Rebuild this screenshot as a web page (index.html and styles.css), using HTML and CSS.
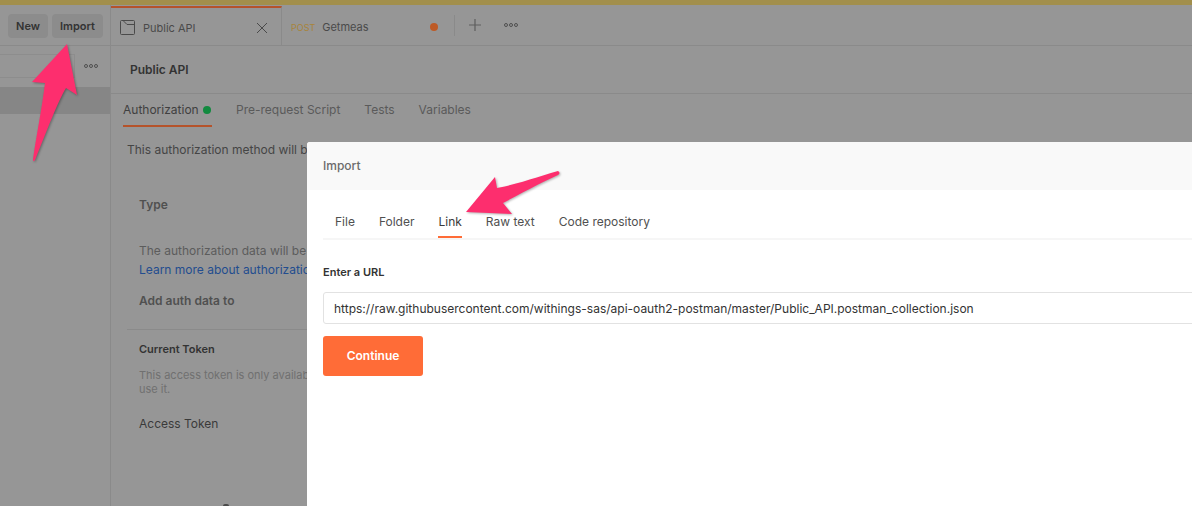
FILE: index.html
```html
<!DOCTYPE html>
<html lang="en">

<head>
    <meta charset="UTF-8">
    <meta name="viewport" content="width=device-width">
    <title>Import</title>
    <link rel="stylesheet" href="styles.css">
</head>

<body>
    <div class="strip"></div>

    <div class="app">
        <aside class="sidebar">
            <div class="side-top">
                <button class="side-btn">New</button>
                <button class="side-btn">Import</button>
            </div>
            <div class="side-search">
                <div class="search-box"></div>
                <span class="dots"><i></i><i></i><i></i></span>
            </div>
            <div class="side-row"></div>
        </aside>

        <main class="main">
            <div class="tabbar">
                <div class="tab tab-active">
                    <svg class="tab-icon" width="15" height="15" viewBox="0 0 15 15" fill="none" stroke="#4a4a4a" stroke-width="1">
                        <rect x="0.5" y="0.5" width="14" height="14" rx="1" />
                        <path d="M3 0.5L7 4.5H14.5" />
                    </svg>
                    <span class="tab-name">Public API</span>
                    <svg class="tab-close" width="12" height="12" viewBox="0 0 12 12" stroke="#4a4a4a" stroke-width="1">
                        <path d="M1 1l10 10M11 1L1 11" />
                    </svg>
                </div>
                <div class="tab tab-req">
                    <span class="method">POST</span>
                    <span class="tab-name">Getmeas</span>
                    <span class="unsaved"></span>
                </div>
                <div class="tab-tools">
                    <svg width="14" height="14" viewBox="0 0 14 14" stroke="#5e5e5e" stroke-width="1.2">
                        <path d="M7 1v12M1 7h12" />
                    </svg>
                    <span class="dots"><i></i><i></i><i></i></span>
                </div>
            </div>

            <div class="title-row">Public API</div>

            <nav class="subtabs">
                <span class="subtab subtab-active">Authorization <b class="green-dot"></b></span>
                <span class="subtab">Pre-request Script</span>
                <span class="subtab">Tests</span>
                <span class="subtab">Variables</span>
            </nav>

            <section class="auth">
                <p class="auth-intro">This authorization method will be used</p>
                <div class="auth-body">
                    <h4 class="auth-type">Type</h4>
                    <p class="auth-note">The authorization data will be automatically</p>
                    <a class="auth-link">Learn more about authorization</a>
                    <h4 class="auth-add">Add auth data to</h4>
                </div>
                <div class="token">
                    <h4 class="token-title">Current Token</h4>
                    <p class="token-note">This access token is only available to<br>use it.</p>
                    <div class="token-label">Access Token</div>
                    <div class="token-foot"></div>
                </div>
            </section>
        </main>
    </div>

    <div class="modal">
        <div class="modal-head">Import</div>
        <div class="modal-body">
            <nav class="modal-tabs">
                <span class="modal-tab">File</span>
                <span class="modal-tab">Folder</span>
                <span class="modal-tab modal-tab-active">Link</span>
                <span class="modal-tab">Raw text</span>
                <span class="modal-tab">Code repository</span>
            </nav>
            <label class="url-label" for="url">Enter a URL</label>
            <input class="url-input" id="url" type="text" value="https://raw.githubusercontent.com/withings-sas/api-oauth2-postman/master/Public_API.postman_collection.json">
            <button class="continue">Continue</button>
        </div>
    </div>

    <!-- arrows drawn on top of the screenshot -->
    <svg class="arrow arrow-import" width="70" height="130" viewBox="0 0 70 130">
        <path d="M37 1L47 52 36 45C28 58 18 85 5 117Q3 120 3 116C6 95 12 65 15 40L2 39Z" />
    </svg>
    <svg class="arrow arrow-link" width="100" height="50" viewBox="0 0 100 50">
        <path d="M93 3Q96 5 93 7C75 15 55 26 38 35L47 46 1 44 30 9 32 20C50 17 72 9 93 3Z" />
    </svg>
</body>

</html>
```
FILE: styles.css
```css
* {
    box-sizing: border-box;
}

html,
body {
    height: 100%;
}

body {
    font-family: 'Inter', 'Liberation Sans', sans-serif;
    background-color: #969696;
    color: #454545;
    font-size: 12px;
    margin: 0;
    overflow: hidden;
    position: relative;
}

p,
h4 {
    margin: 0;
}

.strip {
    height: 5px;
    background-color: #a28f4c;
}

.app {
    display: flex;
    height: 501px;
}

/* sidebar */
.sidebar {
    width: 111px;
    flex-shrink: 0;
    border-right: 1px solid #8a8a8a;
}

.side-top {
    height: 41px;
    display: flex;
    align-items: center;
    gap: 4px;
    padding: 1px 7px 0 0;
    border-bottom: 1px solid #8a8a8a;
    justify-content: flex-end;
}

.side-btn {
    height: 24px;
    border: none;
    border-radius: 4px;
    background-color: #8c8c8c;
    color: #333;
    font-family: inherit;
    font-size: 11px;
    font-weight: 600;
    padding: 0 8px;
}

.side-search {
    height: 32px;
    display: flex;
    align-items: center;
    justify-content: space-between;
    padding-right: 12px;
    margin-top: 4px;
}

.search-box {
    width: 75px;
    height: 24px;
    border: 1px solid #8d8d8d;
    border-left: none;
}

.side-row {
    height: 27px;
    margin-top: 5px;
    background-color: #868686;
}

.dots {
    display: inline-flex;
    gap: 1px;
}

.dots i {
    width: 4px;
    height: 4px;
    border: 1px solid #4f4f4f;
    border-radius: 50%;
}

/* main area */
.main {
    flex: 1;
    min-width: 0;
}

.tabbar {
    height: 41px;
    display: flex;
    border-bottom: 1px solid #8a8a8a;
}

.tab {
    display: flex;
    align-items: center;
}

.tab-active {
    width: 171px;
    height: 40px;
    margin-top: 1px;
    padding: 1px 13px 0 9px;
    border-top: 2px solid #b5532b;
    border-right: 1px solid #8a8a8a;
}

.tab-icon {
    margin-right: 8px;
}

.tab-close {
    margin-left: auto;
}

.tab-name {
    font-size: 11px;
    color: #4a4a4a;
}

.tab-req {
    width: 173px;
    height: 21px;
    margin-top: 10px;
    padding: 3px 0 0 9px;
    border-right: 1px solid #8a8a8a;
}

.method {
    font-size: 9px;
    color: #a8843a;
    margin-right: 7px;
}

.unsaved {
    width: 8px;
    height: 8px;
    border-radius: 50%;
    background-color: #bd5a26;
    margin-left: auto;
    margin-right: 16px;
}

.tab-tools {
    display: flex;
    align-items: center;
    gap: 22px;
    padding-left: 13px;
}

.title-row {
    height: 48px;
    padding: 16px 0 0 19px;
    font-size: 12px;
    font-weight: 600;
    color: #333;
    border-bottom: 1px solid #8a8a8a;
}

.subtabs {
    display: flex;
    gap: 24px;
    padding-left: 12px;
    height: 33px;
}

.subtab {
    font-size: 12px;
    color: #5a5a5a;
    padding-top: 8px;
}

.subtab-active {
    color: #404040;
    width: 89px;
    border-bottom: 2px solid #b5532b;
}

.green-dot {
    display: inline-block;
    width: 8px;
    height: 8px;
    margin-left: 1px;
    border-radius: 50%;
    background-color: #128a3f;
}

.auth {
    height: 374px;
    white-space: nowrap;
}

.auth-intro {
    font-size: 12px;
    line-height: 15px;
    padding: 15px 0 0 16px;
}

.auth-body {
    padding: 40px 0 0 28px;
    height: 172px;
    font-size: 12px;
    line-height: 16px;
}

.auth-type,
.auth-add {
    font-size: 12px;
    font-weight: 600;
    color: #505050;
}

.auth-note {
    color: #5c5c5c;
    margin-top: 30px;
}

.auth-link {
    display: block;
    color: #234d8f;
    margin-top: 3px;
}

.auth-add {
    margin-top: 15px;
}

.token {
    margin-left: 16px;
    padding: 12px 0 0 12px;
    border-top: 1px solid #8a8a8a;
}

.token-title {
    font-size: 11px;
    line-height: 14px;
    font-weight: 600;
    color: #333;
}

.token-note {
    font-size: 11px;
    line-height: 14px;
    color: #707070;
    margin-top: 12px;
}

.token-label {
    font-size: 12px;
    line-height: 16px;
    color: #3a3a3a;
    margin-top: 20px;
}

.token-foot {
    width: 6px;
    height: 2px;
    margin: 72px 0 0 84px;
    border-radius: 3px 3px 0 0;
    background-color: #4a4a4a;
}

/* import dialog, sits above the dimmed app */
.modal {
    position: absolute;
    left: 307px;
    top: 142px;
    right: 0;
    bottom: 0;
    background-color: #fff;
    border-radius: 3px 0 0 0;
    overflow: hidden;
}

.modal-head {
    height: 48px;
    padding: 16px 16px 0;
    background-color: #f9f9f9;
    font-size: 12px;
    font-weight: 500;
    color: #6b6b6b;
}

.modal-body {
    padding: 0 16px;
}

.modal-tabs {
    display: flex;
    gap: 24px;
    padding-left: 12px;
    margin-right: -16px;
    height: 50px;
    border-bottom: 2px solid #f6f6f6;
}

.modal-tab {
    font-size: 12px;
    color: #505050;
    padding-top: 24px;
    height: 48px;
}

.modal-tab-active {
    border-bottom: 2px solid #ff6c37;
    color: #3a3a3a;
}

.url-label {
    display: block;
    font-size: 11px;
    font-weight: 600;
    color: #333;
    margin-top: 25px;
}

.url-input {
    display: block;
    width: 900px;
    height: 32px;
    margin-top: 13px;
    padding: 0 10px;
    border: 1px solid #e2e2e2;
    border-radius: 3px;
    font-family: inherit;
    font-size: 12px;
    color: #333;
}

.continue {
    display: block;
    width: 100px;
    height: 40px;
    margin-top: 12px;
    padding-bottom: 2px;
    border: none;
    border-radius: 3px;
    background-color: #ff6c37;
    color: #fff;
    font-family: inherit;
    font-size: 12px;
    font-weight: 600;
}

.arrow {
    position: absolute;
    fill: #fd2e6e;
    filter: drop-shadow(1px 1px 1px rgba(0, 0, 0, 0.3));
}

.arrow-import {
    left: 30px;
    top: 43px;
}

.arrow-link {
    left: 465px;
    top: 168px;
}
```
